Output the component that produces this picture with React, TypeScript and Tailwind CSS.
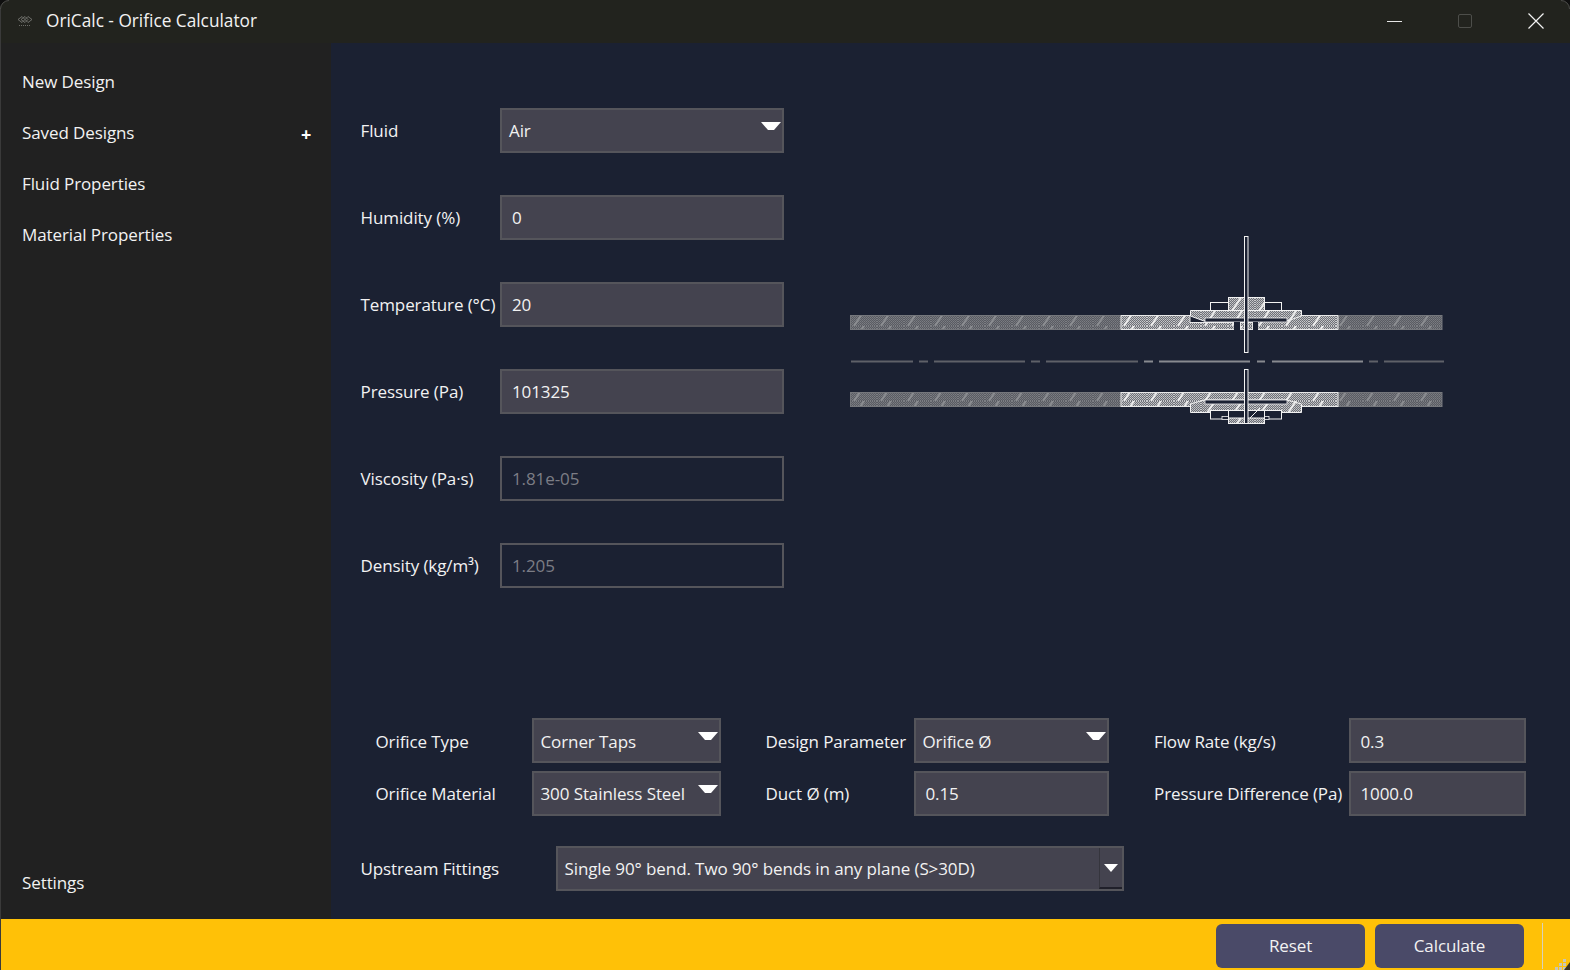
const FONT = "font-['Open_Sans','Noto_Sans',sans-serif]";

const NAV = ['New Design', 'Saved Designs', 'Fluid Properties', 'Material Properties'];

const TEXT = 'text-[17px] tracking-[-0.1px]';

const inputBox =
  `h-[45px] flex items-center bg-[#44434f] border-2 border-[#55555b] ${TEXT} text-[#f2f2f2] relative`;

function Arrow({ className }: { className: string }) {
  return (
    <svg className={`absolute ${className}`} width="20" height="9" viewBox="0 0 20 9">
      <polygon points="0,0 20,0 13,8 7,8" fill="#ffffff" />
    </svg>
  );
}

function Select({ value, className = '', textPad = 'pt-0' }: { value: string; className?: string; textPad?: string }) {
  return (
    <div className={`${inputBox} pl-[7px] ${className}`}>
      <span className={textPad}>{value}</span>
      <Arrow className="right-[1px] top-[12px]" />
    </div>
  );
}

function Field({ value, className = '', textPad = 'pt-0' }: { value: string; className?: string; textPad?: string }) {
  return (
    <div className={`${inputBox} pl-[10px] ${className}`}>
      <span className={textPad}>{value}</span>
    </div>
  );
}

function ReadOnly({ value }: { value: string }) {
  return (
    <div className={`h-[45px] w-[284px] flex items-center border-2 border-[#55555b] pl-[10px] ${TEXT} text-[#7b7d85]`}>
      <span>{value}</span>
    </div>
  );
}

function Row({ label, children }: { label: React.ReactNode; children: React.ReactNode }) {
  return (
    <div className="flex items-center h-[45px]">
      <div className={`w-[139.5px] ${TEXT} text-[#f2f2f2] whitespace-nowrap`}>{label}</div>
      {children}
    </div>
  );
}

function Label({ children, className = '' }: { children: React.ReactNode; className?: string }) {
  return <div className={`${TEXT} text-[#f2f2f2] whitespace-nowrap self-center ${className}`}>{children}</div>;
}

function Drawing() {
  // coordinates are offset from page x=849, y=236
  const dashes = [
    [0, 62], [68, 77], [83, 174], [180, 189], [195, 287], [293, 302], [308, 399], [406, 414], [421, 512], [518, 527], [533, 593],
  ];
  return (
    <svg width="594" height="190" viewBox="0 0 594 190" className="block">
      <defs>
        <pattern id="dotDim" width="2" height="2" patternUnits="userSpaceOnUse">
          <rect width="2" height="2" fill="#5a5c63" />
          <rect width="1" height="1" fill="#7c7e83" />
          <rect x="1" y="1" width="1" height="1" fill="#72747a" />
        </pattern>
        <pattern id="dotLite" width="2" height="2" patternUnits="userSpaceOnUse">
          <rect width="2" height="2" fill="#6f7178" />
          <rect width="1" height="1" fill="#c9cacc" />
          <rect x="1" y="1" width="1" height="1" fill="#b4b5b8" />
        </pattern>
        <pattern id="dim" width="27" height="15" patternUnits="userSpaceOnUse">
          <rect width="27" height="15" fill="url(#dotDim)" />
          <path d="M4 15 L14 0" stroke="#8b8d91" strokeWidth="2" />
        </pattern>
        <pattern id="lite" width="27" height="15" patternUnits="userSpaceOnUse">
          <rect width="27" height="15" fill="url(#dotLite)" />
          <path d="M4 15 L14 0" stroke="#ececec" strokeWidth="2" />
        </pattern>
      </defs>

      {/* top pipe */}
      <rect x="0.5" y="79.5" width="271" height="14" fill="url(#dim)" stroke="#75777c" />
      <rect x="488" y="79.5" width="104" height="14" fill="url(#dim)" stroke="#75777c" />
      <path d="M271 79.5H340V86.5H384V93.5H271Z" fill="url(#lite)" stroke="#e8e8e8" />
      <path d="M408 79.5H488V93.5H408Z" fill="url(#lite)" stroke="#e8e8e8" />
      <rect x="390.5" y="86.5" width="12" height="7" fill="url(#lite)" stroke="#e8e8e8" />

      {/* top flange */}
      <path d="M340.5 74.5H451.5V80L437 85H354L340.5 80Z" fill="url(#lite)" stroke="#f2f2f2" />
      <rect x="360.5" y="66.5" width="71" height="8" fill="#1b2132" stroke="#f2f2f2" />
      <rect x="378.5" y="61.5" width="36" height="13" fill="url(#lite)" stroke="#f2f2f2" />
      <rect x="355" y="82" width="82" height="4" fill="#1b2132" stroke="#f2f2f2" strokeWidth="0.8" />
      <rect x="384" y="86" width="6" height="8" fill="#1b2132" />
      <rect x="403" y="86" width="5" height="8" fill="#1b2132" />

      {/* centre line */}
      {dashes.map(([a, b]) => (
        <rect key={a} x={a + 1} y="124.5" width={b - a} height="2" fill={a >= 271 && b <= 512 ? '#888a8f' : '#5f6168'} />
      ))}

      {/* bottom pipe */}
      <rect x="0.5" y="156.5" width="271" height="14" fill="url(#dim)" stroke="#75777c" />
      <rect x="488" y="156.5" width="104" height="14" fill="url(#dim)" stroke="#75777c" />
      <rect x="271" y="156.5" width="217" height="14" fill="url(#lite)" stroke="#e8e8e8" />

      {/* bottom flange */}
      <path d="M340.5 176.5V168L354 164H437L451.5 168V176.5Z" fill="url(#lite)" stroke="#f2f2f2" />
      <rect x="355" y="164" width="82" height="4" fill="#1b2132" stroke="#f2f2f2" strokeWidth="0.8" />
      <rect x="360.5" y="174.5" width="71" height="8.5" fill="#1b2132" stroke="#f2f2f2" />
      <rect x="372" y="180.5" width="47" height="3" fill="#1b2132" stroke="#f2f2f2" strokeWidth="0.8" />
      <rect x="378.5" y="174.5" width="36" height="13" fill="#1b2132" stroke="#f2f2f2" />
      <rect x="378.5" y="182" width="36" height="5.5" fill="url(#lite)" stroke="#f2f2f2" />
      <path d="M400 182L410 172" stroke="#f2f2f2" strokeWidth="1" />

      {/* plate */}
      <rect x="394.5" y="0.5" width="3.5" height="116" fill="#1b2132" stroke="#f2f2f2" />
      <rect x="394.5" y="133.5" width="3.5" height="54" fill="#1b2132" stroke="#f2f2f2" />
    </svg>
  );
}

export default function App() {
  return (
    <div className={`${FONT} w-screen h-screen overflow-hidden flex flex-col bg-[#1b2132] relative`}>
      {/* Window corners */}
      <svg className="absolute left-0 top-0 z-10" width="10" height="10" viewBox="0 0 10 10">
        <path d="M0 0H9A9 9 0 0 0 0 9Z" fill="#0f0f0f" />
        <path d="M0.5 9A8.5 8.5 0 0 1 9 0.5" fill="none" stroke="#4a4a48" />
      </svg>
      <svg className="absolute right-0 top-0 z-10" width="10" height="10" viewBox="0 0 10 10">
        <path d="M10 0H1A9 9 0 0 1 10 9Z" fill="#0f0f0f" />
        <path d="M9.5 9A8.5 8.5 0 0 0 1 0.5" fill="none" stroke="#4a4a48" />
      </svg>
      <div className="absolute left-0 top-[9px] bottom-0 w-px bg-[#3a3a3a] z-10" />

      {/* Title bar */}
      <header className="h-[43px] shrink-0 bg-[#22231e] flex items-center text-[#f2f2f2] pb-[2px]">
        <svg className="ml-[17px] mr-[13px]" width="16" height="12" viewBox="0 0 16 12" fill="none" stroke="#7d7d7a" strokeWidth="0.8">
          <path d="M1 4.5L5 1.5L8 4.5L5 7.5Z" />
          <path d="M4 4.5L8 1.5L11 4.5L8 7.5Z" />
          <path d="M8 4.5L11 1.5L15 4.5L11 7.5Z" />
          <path d="M2 10.5H14" strokeDasharray="1 1" />
        </svg>
        <span className="text-[17.25px] leading-none">OriCalc - Orifice Calculator</span>
        <div className="ml-auto flex items-center h-full">
          <svg width="16" height="16" viewBox="0 0 16 16" className="mr-[54px]">
            <path d="M0 8.5H15" stroke="#e6e6e6" strokeWidth="1" />
          </svg>
          <svg width="16" height="16" viewBox="0 0 16 16" className="mr-[55px]">
            <rect x="1.5" y="1.5" width="13" height="13" rx="1.5" fill="none" stroke="#4d4e4a" strokeWidth="1" />
          </svg>
          <svg width="16" height="16" viewBox="0 0 16 16" className="mr-[26px]">
            <path d="M0.5 0.5L15.5 15.5M15.5 0.5L0.5 15.5" stroke="#f2f2f2" strokeWidth="1.2" />
          </svg>
        </div>
      </header>

      <div className="flex-1 flex min-h-0">
        {/* Sidebar */}
        <aside className={`w-[331px] shrink-0 bg-[#212121] flex flex-col justify-between ${TEXT} text-[#f2f2f2] pl-[22px] pt-[13px] pb-[11px]`}>
          <nav>
            {NAV.map((item) => (
              <div key={item} className="h-[51px] flex items-center relative">
                {item}
                {item === 'Saved Designs' && (
                  <span className="absolute left-[279px] top-[14px] text-[18px] font-bold text-white">+</span>
                )}
              </div>
            ))}
          </nav>
          <div className="h-[51px] flex items-center">Settings</div>
        </aside>

        {/* Main */}
        <main className="flex-1 flex flex-col pl-[29.5px] pb-[28px] text-[#f2f2f2]">
          <div className="flex pt-[65px]">
            <div className="flex flex-col gap-[42px]">
              <Row label="Fluid"><Select value="Air" className="w-[284px]" /></Row>
              <Row label="Humidity (%)"><Field value="0" className="w-[284px]" /></Row>
              <Row label="Temperature (°C)"><Field value="20" className="w-[284px]" /></Row>
              <Row label="Pressure (Pa)"><Field value="101325" className="w-[284px]" /></Row>
              <Row label="Viscosity (Pa·s)"><ReadOnly value="1.81e-05" /></Row>
              <Row label="Density (kg/m³)"><ReadOnly value="1.205" /></Row>
            </div>
            <div className="ml-[65.5px] pt-[128px]">
              <Drawing />
            </div>
          </div>

          <div className="mt-auto">
            <div className="grid grid-cols-[171px_189px_193px_195px_240px_177px] gap-y-[8px]">
              <Label className="pl-[15px] pt-[3px]">Orifice Type</Label>
              <Select value="Corner Taps" className="w-[189px]" textPad="pt-[2px]" />
              <Label className="pl-[45px] pt-[3px]">Design Parameter</Label>
              <Select value="Orifice Ø" className="w-[195px]" textPad="pt-[2px]" />
              <Label className="pl-[45.5px] pt-[3px]">Flow Rate (kg/s)</Label>
              <Field value="0.3" textPad="pt-[2px]" />
              <Label className="pl-[15px] pt-[1px]">Orifice Material</Label>
              <Select value="300 Stainless Steel" className="w-[189px]" />
              <Label className="pl-[45px] pt-[1px]">Duct Ø (m)</Label>
              <Field value="0.15" />
              <Label className="pl-[45.5px] pt-[1px]">Pressure Difference (Pa)</Label>
              <Field value="1000.0" />
            </div>
            <div className="flex items-center mt-[30px]">
              <div className={`w-[195px] ${TEXT} whitespace-nowrap`}>Upstream Fittings</div>
              <div className={`${inputBox} w-[568px] pl-[7px]`}>
                <span>Single 90° bend. Two 90° bends in any plane (S&gt;30D)</span>
                <div className="absolute right-0 top-0 bottom-0 w-[23px] flex items-center justify-center bg-[#44434f] border-l border-[#35353d] border-b-2 border-b-[#20202a]">
                  <svg width="14" height="8" viewBox="0 0 14 8">
                    <polygon points="0,0 14,0 7,8" fill="#ffffff" />
                  </svg>
                </div>
              </div>
            </div>
          </div>
        </main>
      </div>

      {/* Footer */}
      <footer className={`h-[51px] shrink-0 bg-[#ffc107] flex items-center justify-end relative pr-[46px] gap-[10px] ${TEXT} text-[#f2f2f2]`}>
        <button className="w-[149px] h-[44px] mt-[2px] rounded-[6px] bg-[#4a4a68]">Reset</button>
        <button className="w-[149px] h-[44px] mt-[2px] rounded-[6px] bg-[#4a4a68]">Calculate</button>
        <div className="absolute right-[27px] top-[4px] bottom-[1px] w-px bg-[#d8d2bb]" />
        <div className="absolute right-[4px] bottom-0 grid grid-cols-3 gap-[1px]">
          <span className="w-[3px] h-[3px]" />
          <span className="w-[3px] h-[3px]" />
          <span className="w-[3px] h-[3px] bg-[#c8c6b8]" />
          <span className="w-[3px] h-[3px]" />
          <span className="w-[3px] h-[3px] bg-[#c8c6b8]" />
          <span className="w-[3px] h-[3px] bg-[#c8c6b8]" />
          <span className="w-[3px] h-[3px] bg-[#c8c6b8]" />
          <span className="w-[3px] h-[3px] bg-[#c8c6b8]" />
          <span className="w-[3px] h-[3px] bg-[#c8c6b8]" />
        </div>
        <svg className="absolute right-0 bottom-0" width="6" height="8" viewBox="0 0 6 8">
          <path d="M6 0V8H0Z" fill="#3a3324" />
        </svg>
      </footer>
    </div>
  );
}
